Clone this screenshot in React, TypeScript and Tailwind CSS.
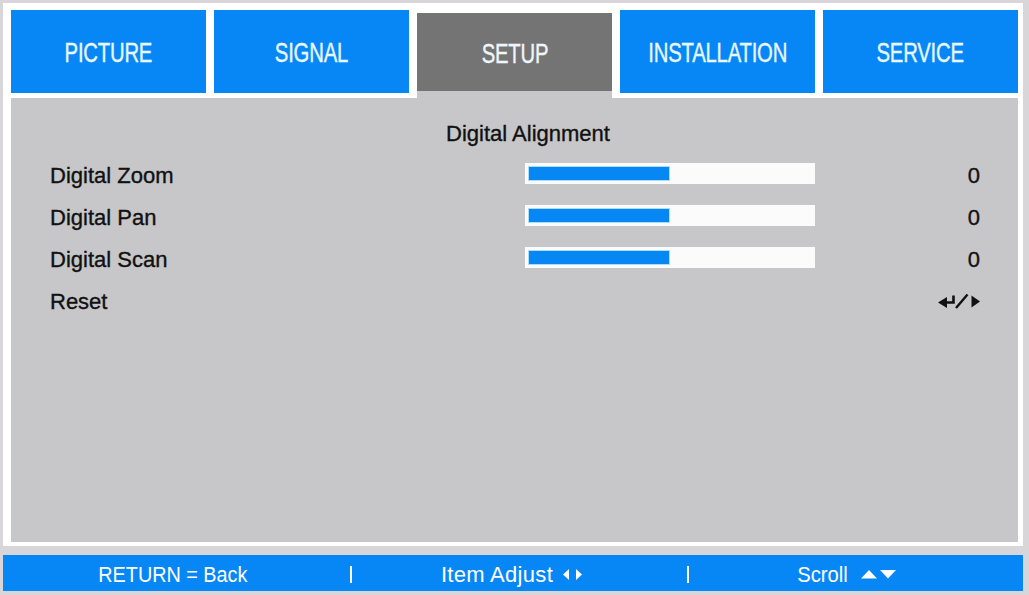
import * as React from "react";

const tabs = ["PICTURE", "SIGNAL", "SETUP", "INSTALLATION", "SERVICE"];
const aktywna = "SETUP";

const wiersze = [
  { label: "Digital Zoom", value: 0 },
  { label: "Digital Pan", value: 0 },
  { label: "Digital Scan", value: 0 },
];

// pasek wartości — zero wypada na środku
function Suwak({ value }: { value: number }) {
  const fill = Math.max(0, Math.min(100, 50 + value));
  return (
    <div className="h-[21px] w-[290px] bg-[#fbfbfb] px-[3px] py-[3px]">
      <div className="h-full w-full">
        <div
          className="h-full border border-[#a8defc] bg-[#0787f3]"
          style={{ width: `${fill}%` }}
        />
      </div>
    </div>
  );
}

function ResetGlyph() {
  return (
    <svg width="42" height="16" viewBox="0 0 42 16" className="block">
      <polygon points="0,9.5 9,4 9,15" fill="#111" />
      <path d="M8 9.5 H15.5 V2.5" stroke="#111" strokeWidth="2.6" fill="none" />
      <path d="M18 15 L29.5 1.5" stroke="#111" strokeWidth="2.4" fill="none" />
      <polygon points="33.5,2.5 42,8.5 33.5,14.5" fill="#111" />
    </svg>
  );
}

function StrzalkiLP() {
  return (
    <svg width="20" height="13" viewBox="0 0 20 13" className="block">
      <polygon points="0,6.5 6,1 6,12" fill="white" />
      <polygon points="13,1 19,6.5 13,12" fill="white" />
    </svg>
  );
}

function StrzalkiGD() {
  return (
    <svg width="36" height="10" viewBox="0 0 36 10" className="block">
      <polygon points="0,9.5 8,1 16,9.5" fill="white" />
      <polygon points="19,1 35,1 27,9.5" fill="white" />
    </svg>
  );
}

function Separator() {
  return <div className="h-[17px] w-[2px] bg-white" />;
}

export default function App() {
  return (
    <div
      className="h-[595px] w-[1029px] overflow-hidden bg-[#d8d6d8] px-[3px] pt-[3px]"
      style={{ fontFamily: '"Liberation Sans", Arial, sans-serif' }}
    >
      <div className="w-[1020px] bg-white pb-[4px] pl-[8px] pr-[5px] pt-[7px]">
        <div className="grid h-[83px] grid-cols-5 items-start gap-[8px]">
          {tabs.map((t) =>
            t === aktywna ? (
              <div key={t} className="flex h-[88px] flex-col">
                <div className="mt-[3px] flex h-[78px] items-center justify-center bg-[#747474] pt-[3px]">
                  <span className="inline-block scale-x-[0.725] text-[28px] tracking-[-0.3px] text-[#eef6fa] [-webkit-text-stroke:0.4px_#eef6fa]">
                    {t}
                  </span>
                </div>
                <div className="flex-1 bg-[#c7c6c8]" />
              </div>
            ) : (
              <div key={t} className="flex h-[83px] items-center justify-center bg-[#0787f5] pt-[3px]">
                <span className="inline-block scale-x-[0.725] text-[28px] tracking-[-0.3px] text-[#e8f8ff] [-webkit-text-stroke:0.4px_#e8f8ff]">
                  {t}
                </span>
              </div>
            )
          )}
        </div>

        <div className="mt-[5px] h-[444px] bg-[#c7c6c8] pl-[39px] pr-[38px] pt-[20px] text-[#111] [-webkit-text-stroke:0.35px_#111]">
          <div className="flex h-[30px] items-center justify-center text-[22px]">
            <span className="ml-[26px]">Digital Alignment</span>
          </div>
          <div className="mt-[6px]">
            {wiersze.map((w) => (
              <div key={w.label} className="flex h-[42px] items-center text-[22px]">
                <span className="w-[475px]">{w.label}</span>
                <div className="-mt-[3px]">
                  <Suwak value={w.value} />
                </div>
                <span className="flex-1 text-right">{w.value}</span>
              </div>
            ))}
            <div className="flex h-[42px] items-center text-[22px]">
              <span className="flex-1">Reset</span>
              <ResetGlyph />
            </div>
          </div>
        </div>
      </div>

      <div className="mt-[9px] flex h-[36px] w-[1020px] items-center bg-[#0787f5] pt-[2px] text-[22px] text-white">
        <div className="flex w-[340px] justify-center">
          <span className="inline-block scale-x-[0.9]">RETURN = Back</span>
        </div>
        <div className="flex w-[16px] justify-center">
          <Separator />
        </div>
        <div className="flex w-[306px] items-center justify-center gap-[10px]">
          <span className="inline-block tracking-[0.3px]">Item Adjust</span>
          <StrzalkiLP />
        </div>
        <div className="flex w-[46px] justify-center">
          <Separator />
        </div>
        <div className="flex w-[270px] items-center justify-center gap-[10px]">
          <span className="inline-block scale-x-[0.92]">Scroll</span>
          <StrzalkiGD />
        </div>
      </div>
    </div>
  );
}
